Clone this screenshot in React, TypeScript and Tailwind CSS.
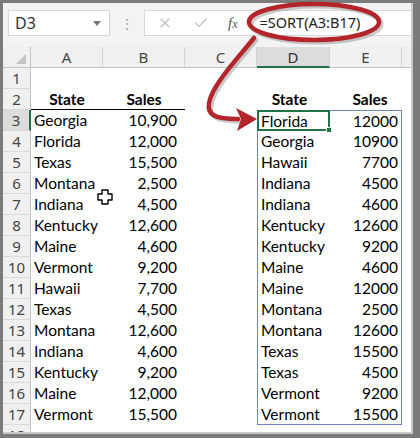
import { X, Check } from "lucide-react"

const left = [
  ["Georgia", "10,900"],
  ["Florida", "12,000"],
  ["Texas", "15,500"],
  ["Montana", "2,500"],
  ["Indiana", "4,500"],
  ["Kentucky", "12,600"],
  ["Maine", "4,600"],
  ["Vermont", "9,200"],
  ["Hawaii", "7,700"],
  ["Texas", "4,500"],
  ["Montana", "12,600"],
  ["Indiana", "4,600"],
  ["Kentucky", "9,200"],
  ["Maine", "12,000"],
  ["Vermont", "15,500"],
]

const sorted = [
  ["Florida", "12000"],
  ["Georgia", "10900"],
  ["Hawaii", "7700"],
  ["Indiana", "4500"],
  ["Indiana", "4600"],
  ["Kentucky", "12600"],
  ["Kentucky", "9200"],
  ["Maine", "4600"],
  ["Maine", "12000"],
  ["Montana", "2500"],
  ["Montana", "12600"],
  ["Texas", "15500"],
  ["Texas", "4500"],
  ["Vermont", "9200"],
  ["Vermont", "15500"],
]

const ui = "font-['Noto_Sans',sans-serif]"
const cell = "font-['Lato',sans-serif] text-[15.5px] text-black leading-[21px] whitespace-nowrap"

function RowHead({ n, active }: { n: number; active?: boolean }) {
  return (
    <div
      className={`${ui} h-[21px] text-[15px] leading-[21px] text-center text-[#444] border-b border-[#dadada] ${
        active ? "bg-[#dcdcdc] border-r-2 border-r-[#217346]" : "bg-[#f0f0f0] border-r border-r-[#c4c4c4]"
      }`}
    >
      {n}
    </div>
  )
}

export default function App() {
  return (
    <div className="relative w-[420px] h-[438px] bg-[#7b7b7b] pt-[3px] pl-[3px] pr-[7px] pb-[4px]">
      <div className="h-full bg-white flex flex-col overflow-hidden border-r-2 border-b-2 border-[#c9c9c9]">
        {/* Formula bar */}
        <div className="h-[44px] shrink-0 bg-[#f3f3f3] flex items-start pt-[7px] pl-[5px]">
          <div className={`${ui} w-[102px] h-[26px] bg-white border border-[#d6d6d6] flex items-center pl-[6px] pr-[8px] text-[16px] text-[#333]`}>
            <span className="flex-1">D3</span>
            <span className="w-0 h-0 border-l-[4px] border-r-[4px] border-t-[5px] border-l-transparent border-r-transparent border-t-[#777]" />
          </div>
          <div className="w-[34px] h-[26px] flex items-center justify-center text-[#a9a9a9] text-[14px]">⋮</div>
          <div className="flex-1 h-[26px] bg-white border border-r-0 border-[#d6d6d6] flex items-center">
            <X className="ml-[12px] h-[16px] w-[16px] text-[#bcbcbc]" strokeWidth={1.6} />
            <Check className="ml-[20px] h-[16px] w-[16px] text-[#bcbcbc]" strokeWidth={1.6} />
            <span className="ml-[19px] font-['Liberation_Serif',serif] italic text-[15px] text-[#555]">
              f<span className="text-[12px]">x</span>
            </span>
            <span className={`${ui} ml-[22px] text-[14.5px] text-[#222]`}>=SORT(A3:B17)</span>
          </div>
        </div>

        {/* Grid */}
        <div className="grid grid-cols-[28px_72px_82px_72px_73px_72px_1fr] auto-rows-[21px]">
          {/* Column headers */}
          <div className="bg-[#f0f0f0] border-r border-b border-[#c4c4c4] relative">
            <div className="absolute right-[4px] bottom-[3px] w-0 h-0 border-l-[10px] border-t-[10px] border-l-transparent border-t-transparent border-b-0 border-r-[10px] border-r-[#c3c3c3] border-b-transparent" />
          </div>
          {["A", "B", "C"].map((c) => (
            <div key={c} className={`${ui} bg-[#f0f0f0] border-r border-[#d4d4d4] border-b border-b-[#c4c4c4] text-center text-[15px] leading-[20px] text-[#444]`}>
              {c}
            </div>
          ))}
          <div className={`${ui} bg-[#dcdcdc] border-r border-[#d4d4d4] border-b-2 border-b-[#217346] text-center text-[15px] leading-[20px] text-[#333]`}>
            D
          </div>
          <div className={`${ui} bg-[#f0f0f0] border-r border-[#d4d4d4] border-b border-b-[#c4c4c4] text-center text-[15px] leading-[20px] text-[#444]`}>
            E
          </div>
          <div className="bg-[#f0f0f0] border-b border-[#c4c4c4]" />

          {/* Row 1 */}
          <RowHead n={1} />
          <div className="col-span-6" />

          {/* Row 2 */}
          <RowHead n={2} />
          <div className={`${cell} font-bold text-center border-b border-black`}>State</div>
          <div className={`${cell} font-bold text-center border-b border-black`}>Sales</div>
          <div />
          <div className={`${cell} font-bold text-center pr-[8px]`}>State</div>
          <div className={`${cell} font-bold text-center pl-[8px]`}>Sales</div>
          <div />

          {left.map(([s, v], i) => {
            const [ss, sv] = sorted[i]
            const first = i === 0
            const last = i === left.length - 1
            return (
              <div key={i} className="contents">
                <RowHead n={i + 3} active={first} />
                <div className={`${cell} pl-[3px]`}>{s}</div>
                <div className={`${cell} text-right pr-[8px]`}>{v}</div>
                <div />
                <div
                  className={`${cell} relative pl-[3px] border-l border-[#6a86c2] ${last ? "border-b" : ""} ${first ? "border-t" : ""}`}
                >
                  {first && (
                    <div className="absolute -left-[1px] -top-[1px] right-0 bottom-0 border-2 border-[#217346]">
                      <div className="absolute -right-[4px] -bottom-[4px] w-[6px] h-[6px] bg-[#217346] border border-white" />
                    </div>
                  )}
                  {ss}
                </div>
                <div
                  className={`${cell} text-right pr-[3px] border-r border-[#6a86c2] ${last ? "border-b" : ""} ${first ? "border-t" : ""}`}
                >
                  {sv}
                </div>
                <div />
              </div>
            )
          })}

          <RowHead n={18} />
          <div className="col-span-6" />
        </div>
      </div>

      {/* Annotation */}
      <svg className="absolute inset-0 pointer-events-none" width="420" height="438" viewBox="0 0 420 438">
        <g fill="none" stroke="#8a8a8a" strokeOpacity="0.45" strokeWidth="5" strokeLinecap="round" transform="translate(2 2)">
          <ellipse cx="314" cy="22" rx="65" ry="18" />
          <path d="M254 38 C238 58 212 85 209 103 C207 115 215 119 238 119" />
        </g>
        <g fill="none" stroke="#b3242b" strokeWidth="4.5" strokeLinecap="round">
          <ellipse cx="314" cy="22" rx="65" ry="18" />
          <path d="M254 38 C238 58 212 85 209 103 C207 115 215 119 238 119" />
        </g>
        <polygon points="236,108 257,119 237,131 241,119" fill="#b3242b" />
        {/* cell cursor */}
        <path
          d="M102 190 h6 v4 h4 v6 h-4 v4 h-6 v-4 h-4 v-6 h4 z"
          fill="#fff"
          stroke="#000"
          strokeWidth="1.4"
          strokeLinejoin="round"
        />
      </svg>
    </div>
  )
}
